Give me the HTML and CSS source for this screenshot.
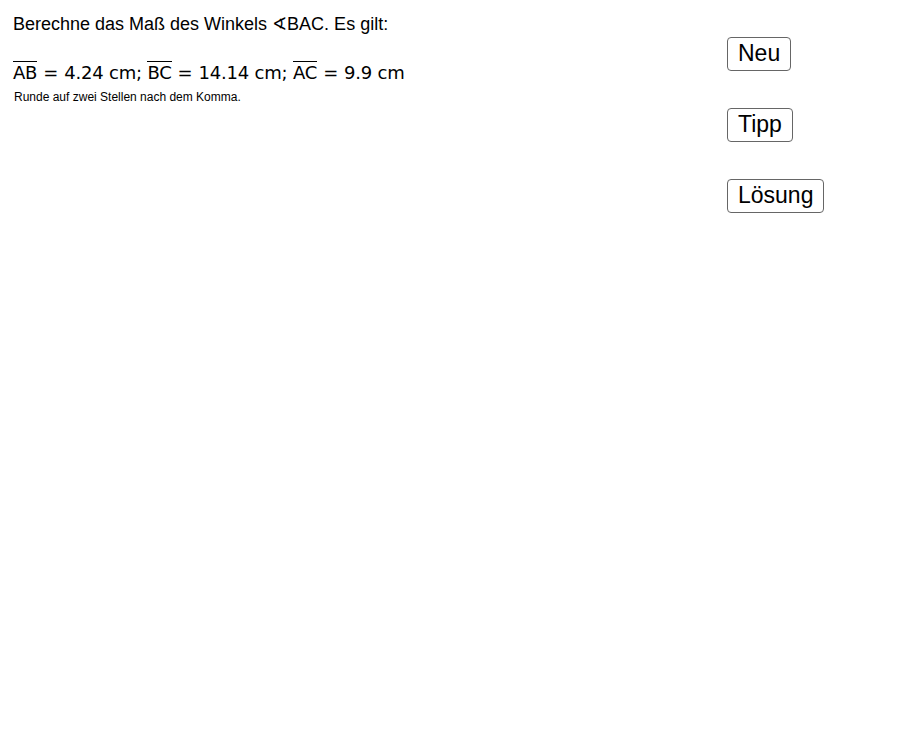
FILE: index.html
```html
<!DOCTYPE html>
<html lang="de">
<head>
    <meta charset="UTF-8">
    <title>Winkel berechnen</title>
    <link rel="stylesheet" href="styles.css">
</head>
<body>
<div class="sheet">
    <div class="task">
        <p class="question">Berechne das Maß des Winkels ∢BAC. Es gilt:</p>
        <p class="formula"><span class="seg">AB</span><span class="eq">=</span>4.24 cm; <span class="seg">BC</span><span class="eq">=</span>14.14 cm; <span class="seg">AC</span><span class="eq">=</span>9.9 cm</p>
        <p class="hint">Runde auf zwei Stellen nach dem Komma.</p>
    </div>
    <div class="buttons">
        <button class="btn">Neu</button>
        <button class="btn">Tipp</button>
        <button class="btn">Lösung</button>
    </div>
</div>
</body>
</html>
```

FILE: styles.css
```css
*{
    margin: 0;
    padding: 0;
}

body{
    background: #ffffff;
    color: #000000;
    font-family: "Liberation Sans", Arial, sans-serif;
}

.sheet{
    display: flex;
    justify-content: space-between;
    width: 917px;
    height: 734px;
}

.task{
    padding: 12px 0 0 13px;
}

.question{
    font-size: 18px;
    line-height: 24px;
}

.formula{
    margin-top: 26px;
    font-family: "DejaVu Sans", sans-serif;
    font-size: 18px;
    line-height: 22px;
    letter-spacing: -0.2px;
    white-space: nowrap;
}

/* Strecke: Strich ueber den Buchstaben */
.seg{
    border-top: 1px solid #000000;
}

.eq{
    margin: 0 6px;
}

.hint{
    margin-top: 6px;
    margin-left: 1px;
    font-size: 12px;
    line-height: 14px;
}

.buttons{
    display: flex;
    flex-direction: column;
    align-items: flex-start;
    gap: 37px;
    width: 190px;
    padding-top: 37px;
}

.btn{
    height: 34px;
    padding: 0 10px 2px;
    background: #ffffff;
    border: 1px solid #666666;
    border-radius: 4px;
    font-family: "Liberation Sans", Arial, sans-serif;
    font-size: 23px;
    color: #000000;
}
```
